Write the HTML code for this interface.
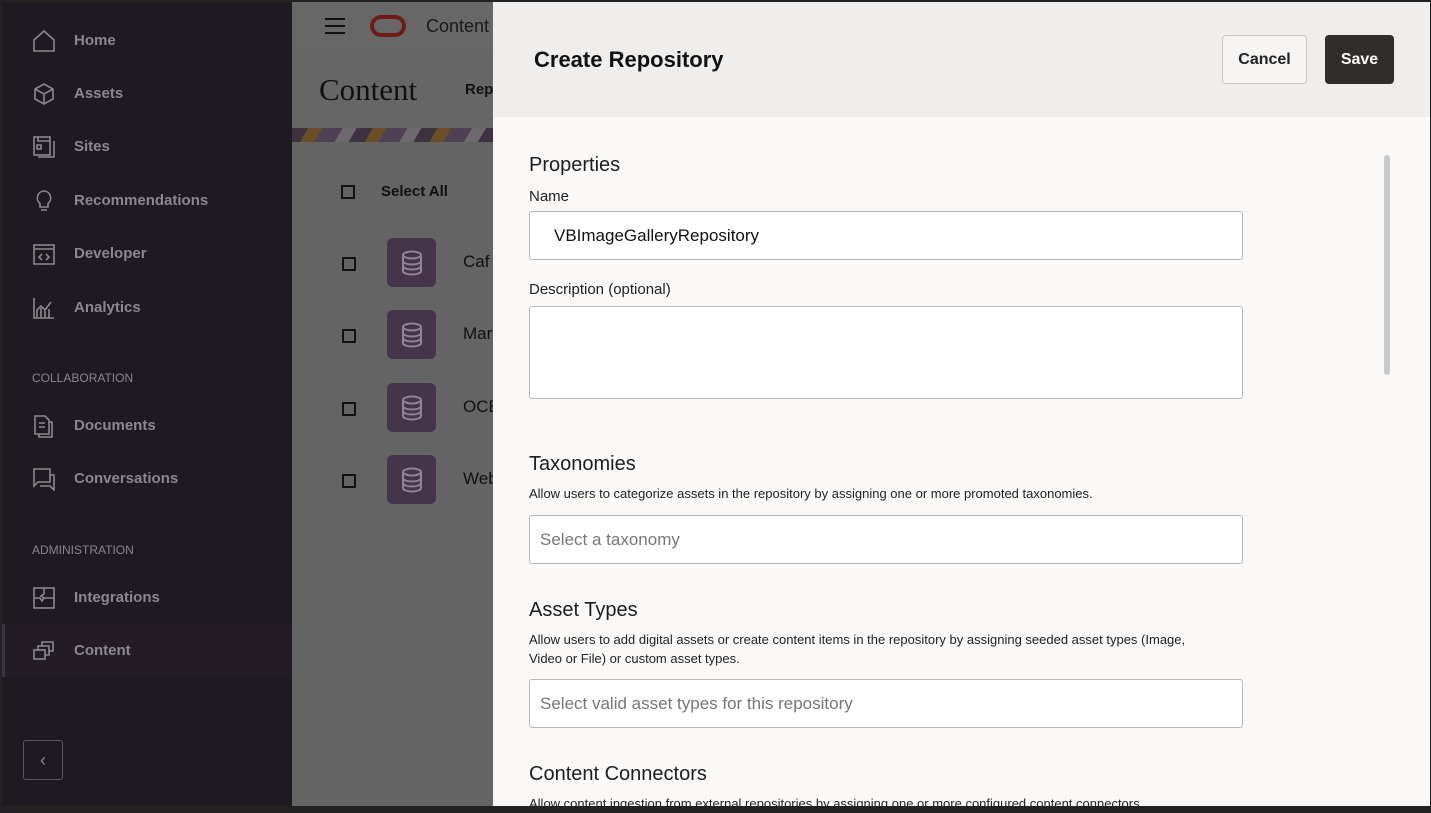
<!DOCTYPE html>
<html><head><meta charset="utf-8"><style>
*{box-sizing:border-box;margin:0;padding:0}
body{width:1431px;height:808px;overflow:hidden;font-family:"Liberation Sans",sans-serif;background:#222;position:relative}
#side{position:absolute;left:2px;top:2px;width:290px;height:804px;background:#1f1921;color:#8f8a90}
.nav{position:absolute;left:0;width:290px;height:53px;display:flex;align-items:center}
.nav svg{position:absolute;left:30px}
.nav span{position:absolute;left:72px;font-size:15px;font-weight:bold;color:#8c878e}
.sec{position:absolute;left:30px;font-size:12px;color:#8a858c}
#main{position:absolute;left:292px;top:2px;width:201px;height:804px;background:#646464}
#hdr{position:absolute;left:0;top:0;width:201px;height:50px;background:#676767}
#panel{position:absolute;left:493px;top:2px;width:937px;height:804px;background:#faf9f8}
#ph{position:absolute;left:0;top:0;width:937px;height:115px;background:#efeeed}
.btn{position:absolute;top:33px;height:49px;border-radius:4px;font-size:16px;font-weight:bold;display:flex;align-items:center;justify-content:center}
.lbl{position:absolute;left:36px;font-size:15px;color:#222}
.h{position:absolute;left:36px;font-size:20px;color:#1d1d1d}
.p{position:absolute;left:36px;font-size:13px;color:#222;width:690px;line-height:19px}
.in{position:absolute;left:36px;width:714px;background:#fff;border:1px solid #b9b8b6;border-radius:3px;font-size:17px;padding-left:10px;display:flex;align-items:center;color:#777}
.chk{position:absolute;width:14px;height:14px;border:2px solid #111;border-radius:1px}
.ic{position:absolute;left:95px;width:49px;height:49px;background:#45354b;border-radius:6px;display:flex;align-items:center;justify-content:center}
</style></head><body>
<div id="side">
 <div class="nav" style="top:12px"><svg width="24" height="24" viewBox="0 0 24 24" fill="none" stroke="#8c878e" stroke-width="1.6"><path d="M2 11L12 2l10 9v11H2z"/></svg><span>Home</span></div>
 <div class="nav" style="top:65px"><svg width="24" height="24" viewBox="0 0 24 24" fill="none" stroke="#8c878e" stroke-width="1.6"><path d="M12 2l9 5v10l-9 5-9-5V7zM3 7l9 5 9-5M12 12v10"/></svg><span>Assets</span></div>
 <div class="nav" style="top:118px"><svg width="24" height="24" viewBox="0 0 24 24" fill="none" stroke="#8c878e" stroke-width="1.6"><rect x="2" y="2" width="16" height="18"/><path d="M6 2v4h12M22 6v16H6"/><rect x="5" y="10" width="4" height="4"/></svg><span>Sites</span></div>
 <div class="nav" style="top:172px"><svg width="24" height="24" viewBox="0 0 24 24" fill="none" stroke="#8c878e" stroke-width="1.6"><path d="M12 2a7 7 0 0 0-4 12.5V18h8v-3.5A7 7 0 0 0 12 2zM9 21h6"/></svg><span>Recommendations</span></div>
 <div class="nav" style="top:225px"><svg width="24" height="24" viewBox="0 0 24 24" fill="none" stroke="#8c878e" stroke-width="1.6"><rect x="2" y="3" width="20" height="19"/><path d="M2 7h20M10 12l-3 3 3 3M14 12l3 3-3 3"/></svg><span>Developer</span></div>
 <div class="nav" style="top:279px"><svg width="24" height="24" viewBox="0 0 24 24" fill="none" stroke="#8c878e" stroke-width="1.6"><path d="M2 2v20h20M5 22v-8M9 22v-10M13 22v-7M17 22v-9M5 14l4-4 4 4 6-8"/></svg><span>Analytics</span></div>
 <div class="sec" style="top:369px">COLLABORATION</div>
 <div class="nav" style="top:397px"><svg width="24" height="24" viewBox="0 0 24 24" fill="none" stroke="#8c878e" stroke-width="1.6"><path d="M3 2h10l4 4v14H3zM7 9h6M7 13h6M17 8h3v15H7v-3"/></svg><span>Documents</span></div>
 <div class="nav" style="top:450px"><svg width="24" height="24" viewBox="0 0 24 24" fill="none" stroke="#8c878e" stroke-width="1.6"><path d="M2 2h16v13H6l-4 4zM8 19h10l4 4V8h-4"/></svg><span>Conversations</span></div>
 <div class="sec" style="top:541px">ADMINISTRATION</div>
 <div class="nav" style="top:569px"><svg width="24" height="24" viewBox="0 0 24 24" fill="none" stroke="#8c878e" stroke-width="1.6"><rect x="2" y="2" width="20" height="20"/><path d="M2 12h6l2 3 2-3h10M12 2v6l-3 2 3 2"/></svg><span>Integrations</span></div>
 <div class="nav" style="top:622px;background:#231c27;border-left:3px solid #3a3340"><svg width="24" height="24" viewBox="0 0 24 24" fill="none" stroke="#8c878e" stroke-width="1.6" style="left:27px"><rect x="2" y="11" width="11" height="9"/><path d="M6 11V7h11v9h-4M10 7V3h11v9h-4"/></svg><span style="left:69px">Content</span></div>
 <div style="position:absolute;left:21px;top:738px;width:40px;height:40px;border:1px solid #5a545c;border-radius:3px;color:#8c878e;font-size:18px;display:flex;align-items:center;justify-content:center">&#8249;</div>
</div>
<div id="main">
 <div id="hdr"></div>
 <div style="position:absolute;left:33px;top:16px;width:20px;height:16px;border-top:2px solid #111;border-bottom:2px solid #111"><div style="margin-top:5px;border-top:2px solid #111"></div></div>
 <div style="position:absolute;left:78px;top:13px;width:36px;height:22px;border:4px solid #6e1c17;border-radius:11px"></div>
 <div style="position:absolute;left:134px;top:14px;font-size:18px;color:#1a1a1a">Content</div>
 <div style="position:absolute;left:0;top:50px;width:201px;height:76px;background:#666"></div>
 <div style="position:absolute;left:27px;top:70px;font-family:'Liberation Serif',serif;font-size:31px;color:#111">Content</div>
 <div style="position:absolute;left:173px;top:79px;font-size:15px;font-weight:bold;color:#111">Rep</div>
 <div style="position:absolute;left:0;top:126px;width:201px;height:14px;background:repeating-linear-gradient(120deg,#3e3140 0 14px,#6a4f24 14px 26px,#4f4153 26px 44px,#6f6871 44px 56px)"></div>
 <div class="chk" style="left:49px;top:183px"></div>
 <div style="position:absolute;left:89px;top:181px;font-size:15px;font-weight:bold;color:#111">Select All</div>
 <div class="chk" style="left:50px;top:255px"></div><div class="ic" style="top:236px"><svg width="24" height="26" viewBox="0 0 24 26" fill="none" stroke="#8f8596" stroke-width="2"><ellipse cx="12" cy="5" rx="9" ry="3.5"/><path d="M3 5v16c0 2 4 3.5 9 3.5s9-1.5 9-3.5V5M3 11c0 2 4 3.5 9 3.5s9-1.5 9-3.5M3 16c0 2 4 3.5 9 3.5s9-1.5 9-3.5"/></svg></div><div style="position:absolute;left:171px;top:250px;font-size:17px;color:#111">Caf</div>
 <div class="chk" style="left:50px;top:327px"></div><div class="ic" style="top:308px"><svg width="24" height="26" viewBox="0 0 24 26" fill="none" stroke="#8f8596" stroke-width="2"><ellipse cx="12" cy="5" rx="9" ry="3.5"/><path d="M3 5v16c0 2 4 3.5 9 3.5s9-1.5 9-3.5V5M3 11c0 2 4 3.5 9 3.5s9-1.5 9-3.5M3 16c0 2 4 3.5 9 3.5s9-1.5 9-3.5"/></svg></div><div style="position:absolute;left:171px;top:322px;font-size:17px;color:#111">Mar</div>
 <div class="chk" style="left:50px;top:400px"></div><div class="ic" style="top:381px"><svg width="24" height="26" viewBox="0 0 24 26" fill="none" stroke="#8f8596" stroke-width="2"><ellipse cx="12" cy="5" rx="9" ry="3.5"/><path d="M3 5v16c0 2 4 3.5 9 3.5s9-1.5 9-3.5V5M3 11c0 2 4 3.5 9 3.5s9-1.5 9-3.5M3 16c0 2 4 3.5 9 3.5s9-1.5 9-3.5"/></svg></div><div style="position:absolute;left:171px;top:395px;font-size:17px;color:#111">OCE</div>
 <div class="chk" style="left:50px;top:472px"></div><div class="ic" style="top:453px"><svg width="24" height="26" viewBox="0 0 24 26" fill="none" stroke="#8f8596" stroke-width="2"><ellipse cx="12" cy="5" rx="9" ry="3.5"/><path d="M3 5v16c0 2 4 3.5 9 3.5s9-1.5 9-3.5V5M3 11c0 2 4 3.5 9 3.5s9-1.5 9-3.5M3 16c0 2 4 3.5 9 3.5s9-1.5 9-3.5"/></svg></div><div style="position:absolute;left:171px;top:467px;font-size:17px;color:#111">Web</div>
</div>
<div id="panel">
 <div id="ph"></div>
 <div style="position:absolute;left:41px;top:45px;font-size:22px;font-weight:bold;color:#111">Create Repository</div>
 <div class="btn" style="left:729px;width:85px;border:1px solid #c9c8c6;background:#f6f5f4;color:#222">Cancel</div>
 <div class="btn" style="left:832px;width:69px;background:#312d2a;color:#fff">Save</div>
 <div style="position:absolute;left:891px;top:153px;width:6px;height:220px;background:#c9c9c9;border-radius:3px"></div>
 <div class="h" style="top:152px">Properties</div>
 <div class="lbl" style="top:186px">Name</div>
 <div class="in" style="top:209px;height:49px;color:#111;padding-left:24px">VBImageGalleryRepository</div>
 <div class="lbl" style="top:279px">Description (optional)</div>
 <div class="in" style="top:304px;height:93px"></div>
 <div class="h" style="top:451px">Taxonomies</div>
 <div class="p" style="top:482px">Allow users to categorize assets in the repository by assigning one or more promoted taxonomies.</div>
 <div class="in" style="top:513px;height:49px">Select a taxonomy</div>
 <div class="h" style="top:597px">Asset Types</div>
 <div class="p" style="top:628px;width:680px">Allow users to add digital assets or create content items in the repository by assigning seeded asset types (Image, Video or File) or custom asset types.</div>
 <div class="in" style="top:677px;height:49px">Select valid asset types for this repository</div>
 <div class="h" style="top:761px">Content Connectors</div>
 <div class="p" style="top:792px">Allow content ingestion from external repositories by assigning one or more configured content connectors.</div>
</div>
</body></html>
